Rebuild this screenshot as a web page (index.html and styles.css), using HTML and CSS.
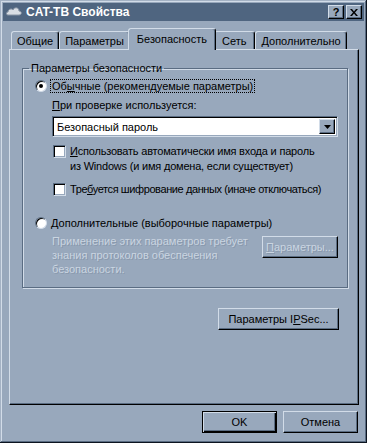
FILE: index.html
```html
<!DOCTYPE html>
<html>
<head>
    <title>CAT-TB Свойства</title>
    <meta charset="utf-8">
    <link rel="stylesheet" href="styles.css">
</head>
<body>
    <div class="window">
        <div class="titlebar">
            <svg class="app-icon" width="16" height="12" viewBox="0 0 16 12">
                <path d="M2 9 C0 9 0 6 2 6 C2 3 6 2 7 4 C8 1 13 1 13 5 C16 5 16 9 13 9 Z" fill="#d8dde4" stroke="#8894a4" stroke-width="1"/>
            </svg>
            <span class="title">CAT-TB Свойства</span>
            <div class="caption-buttons">
                <span class="cap-btn">?</span>
                <span class="cap-btn">
                    <svg width="8" height="7" viewBox="0 0 8 7"><path d="M0 0h2l2 2.5L6 0h2L5 3.5 8 7H6L4 4.5 2 7H0l3-3.5z" fill="#000"/></svg>
                </span>
            </div>
        </div>

        <div class="client">
            <div class="tabs">
                <div class="tab">Общие</div>
                <div class="tab">Параметры</div>
                <div class="tab active">Безопасность</div>
                <div class="tab wide">Сеть</div>
                <div class="tab">Дополнительно</div>
            </div>

            <div class="panel">
                <fieldset class="group">
                    <legend>Параметры безопасности</legend>

                    <div class="option">
                        <span class="radio checked"></span>
                        <span class="focus">Об<u>ы</u>чные (рекомендуемые параметры)</span>
                    </div>

                    <div class="indent">
                        <div class="caption"><u>П</u>ри проверке используется:</div>
                        <div class="combo">
                            <span class="combo-text">Безопасный пароль</span>
                            <span class="combo-btn">
                                <svg width="7" height="4" viewBox="0 0 7 4"><path d="M0 0h7L3.5 4z" fill="#000"/></svg>
                            </span>
                        </div>

                        <div class="check-row first">
                            <span class="checkbox"></span>
                            <span class="check-text"><u>И</u>спользовать автоматически имя входа и пароль<br>из Windows (и имя домена, если существует)</span>
                        </div>
                        <div class="check-row second">
                            <span class="checkbox"></span>
                            <span class="check-text nowrap">Тре<u>б</u>уется шифрование данных (иначе отключаться)</span>
                        </div>
                    </div>

                    <div class="option second">
                        <span class="radio"></span>
                        <span><u>Д</u>ополнительные (выборочные параметры)</span>
                    </div>

                    <div class="indent advanced">
                        <p class="disabled-text">Применение этих параметров требует знания протоколов обеспечения безопасности.</p>
                        <button class="btn params" disabled><u>П</u>араметры...</button>
                    </div>
                </fieldset>

                <div class="ipsec-row">
                    <button class="btn ipsec">Параметры I<u>P</u>Sec...</button>
                </div>
            </div>

            <div class="dialog-buttons">
                <button class="btn default">OK</button>
                <button class="btn">Отмена</button>
            </div>
        </div>
    </div>
</body>
</html>
```

FILE: styles.css
```css
body {
    margin: 0;
    background-color: #98a8bc;
    font-family: "Liberation Sans", Arial, sans-serif;
    font-size: 11px;
    color: #000;
}

.window {
    width: 367px;
    height: 443px;
    box-sizing: border-box;
    padding: 3px;
    background-color: #98a8bc;
    box-shadow: inset -1px -1px 0 #0c1420, inset 1px 1px 0 #a4b2c4,
                inset -2px -2px 0 #5a6c82, inset 2px 2px 0 #d2dce8;
}

.titlebar {
    height: 18px;
    background-color: #4f6580;
    display: flex;
    align-items: center;
    padding: 0 2px 0 2px;
}

.app-icon {
    margin: 0 4px 0 1px;
}

.title {
    color: #fff;
    font-weight: bold;
    font-size: 12px;
    flex: 1;
}

.caption-buttons {
    display: flex;
    gap: 2px;
}

.cap-btn {
    width: 16px;
    height: 14px;
    box-sizing: border-box;
    background-color: #98a8bc;
    border: 1px solid;
    border-color: #d2dce8 #000 #000 #d2dce8;
    box-shadow: inset -1px -1px 0 #5a6c82;
    display: flex;
    align-items: center;
    justify-content: center;
    font-weight: bold;
    font-size: 11px;
    line-height: 1;
}

.client {
    padding: 6px 5px 0 6px;
}

.tabs {
    display: flex;
    align-items: flex-end;
    height: 22px;
    padding-left: 2px;
    position: relative;
    z-index: 1;
}

.tab {
    height: 18px;
    box-sizing: border-box;
    padding: 2px 5px 0 5px;
    border: 1px solid;
    border-bottom: none;
    border-color: #d2dce8 #000 transparent #d2dce8;
    box-shadow: inset -1px 0 0 #5a6c82;
    border-radius: 3px 3px 0 0;
    background-color: #98a8bc;
    line-height: 14px;
}

.tab.wide {
    padding: 2px 8px 0 7px;
}

.tab.active {
    height: 22px;
    margin: 0 -2px 0 -2px;
    padding: 3px 8px 0 8px;
    position: relative;
    top: 1px;
}

.panel {
    height: 356px;
    box-sizing: border-box;
    border: 1px solid;
    border-color: #d2dce8 #000 #000 #d2dce8;
    box-shadow: inset -1px -1px 0 #5a6c82;
    display: flex;
    flex-direction: column;
}

.group {
    margin: 12px 10px 0 12px;
    padding: 4px 9px 0 12px;
    height: 226px;
    box-sizing: border-box;
    border: 1px solid #5a6c82;
    box-shadow: inset 1px 1px 0 #d2dce8, 1px 1px 0 #d2dce8;
}

.group legend {
    padding: 0 2px;
    margin-left: -6px;
    line-height: 13px;
}

.option {
    display: flex;
    align-items: center;
    height: 14px;
}

.option.second {
    margin-top: 19px;
}

.radio {
    width: 12px;
    height: 12px;
    box-sizing: border-box;
    border-radius: 50%;
    background-color: #fff;
    border: 1px solid;
    border-color: #5a6c82 #d2dce8 #d2dce8 #5a6c82;
    box-shadow: inset 1px 1px 0 #000;
    margin-right: 4px;
    display: flex;
    align-items: center;
    justify-content: center;
}

.radio.checked::after {
    content: "";
    width: 4px;
    height: 4px;
    border-radius: 50%;
    background-color: #000;
}

.focus {
    outline: 1px dotted #000;
    outline-offset: 0;
    padding: 0 1px;
}

.indent {
    margin-left: 17px;
}

.caption {
    margin-top: 5px;
    line-height: 14px;
}

.combo {
    margin-top: 4px;
    height: 21px;
    box-sizing: border-box;
    background-color: #fff;
    border: 1px solid;
    border-color: #5a6c82 #d2dce8 #d2dce8 #5a6c82;
    box-shadow: inset 1px 1px 0 #000, inset -1px -1px 0 #98a8bc;
    display: flex;
    align-items: center;
    padding: 2px;
}

.combo-text {
    flex: 1;
    padding-left: 2px;
}

.combo-btn {
    width: 16px;
    height: 15px;
    box-sizing: border-box;
    background-color: #98a8bc;
    border: 1px solid;
    border-color: #d2dce8 #000 #000 #d2dce8;
    box-shadow: inset -1px -1px 0 #5a6c82;
    display: flex;
    align-items: center;
    justify-content: center;
}

.check-row {
    display: flex;
    align-items: flex-start;
    margin-left: 1px;
}

.check-row.first {
    margin-top: 8px;
}

.check-row.second {
    margin-top: 9px;
}

.checkbox {
    flex: none;
    width: 13px;
    height: 13px;
    box-sizing: border-box;
    background-color: #fff;
    border: 1px solid;
    border-color: #5a6c82 #d2dce8 #d2dce8 #5a6c82;
    box-shadow: inset 1px 1px 0 #000, inset -1px -1px 0 #98a8bc;
    margin-right: 4px;
}

.check-text {
    line-height: 15px;
    margin-top: -1px;
    letter-spacing: -0.2px;
}

.check-text.nowrap {
    white-space: nowrap;
    letter-spacing: -0.4px;
}

.advanced {
    display: flex;
    align-items: flex-start;
    justify-content: space-between;
    margin-top: 4px;
}

.disabled-text {
    margin: 0;
    width: 200px;
    line-height: 14px;
    color: #cad5e1;
    text-shadow: 1px 1px 0 #8898ac;
}

.btn {
    font-family: "Liberation Sans", Arial, sans-serif;
    font-size: 11px;
    color: #000;
    background-color: #98a8bc;
    border: 1px solid;
    border-color: #d2dce8 #000 #000 #d2dce8;
    box-shadow: inset -1px -1px 0 #5a6c82;
    height: 22px;
    padding: 0;
    border-radius: 0;
}

.btn:disabled {
    color: #cad5e1;
    text-shadow: 1px 1px 0 #8898ac;
}

.params {
    width: 76px;
    margin-top: 2px;
}

.ipsec-row {
    display: flex;
    justify-content: flex-end;
    margin: 20px 19px 0 0;
}

.ipsec {
    width: 121px;
}

.dialog-buttons {
    display: flex;
    justify-content: flex-end;
    gap: 6px;
    margin-top: 6px;
    padding-right: 1px;
}

.dialog-buttons .btn {
    width: 75px;
}

.btn.default {
    border: 1px solid #000;
    box-shadow: inset 1px 1px 0 #d2dce8, inset -1px -1px 0 #000, inset -2px -2px 0 #5a6c82;
}
```
